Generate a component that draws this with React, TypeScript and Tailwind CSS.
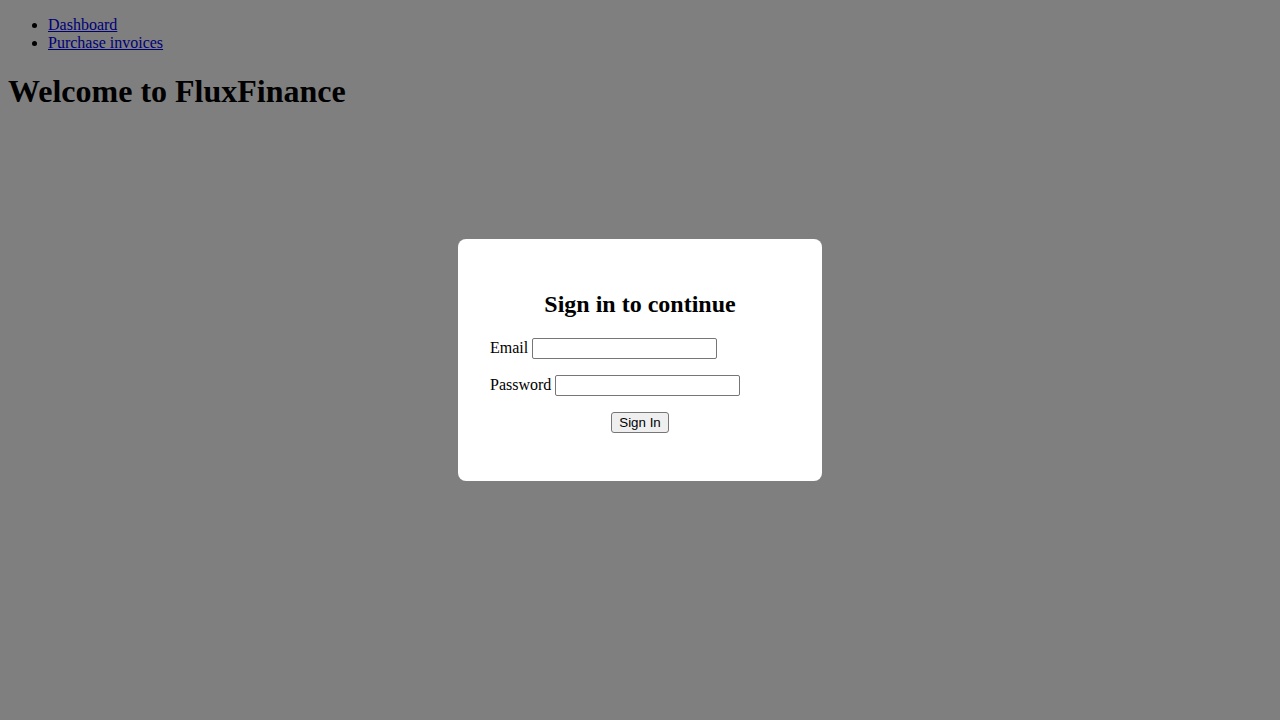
import React from "react";

const NAV = ["Dashboard", "Purchase invoices"];

export default function App() {
  return (
    <div className="min-h-screen bg-white text-black font-['Liberation_Serif',serif] text-[16px] leading-[normal]">
      <div className="px-2 pt-px">
        <ul className="list-disc pl-10 mt-[15px] mb-4">
          {NAV.map((item) => (
            <li key={item}>
              <a href="#" className="text-[#0000ee] underline">
                {item}
              </a>
            </li>
          ))}
        </ul>
        <h1 className="text-[32px] font-bold my-[21.44px]">Welcome to FluxFinance</h1>
      </div>

      {/* Sign-in modal over a dimmed page */}
      <div className="fixed inset-0 bg-black/50 flex items-center justify-center">
        <div className="bg-white rounded-lg w-[364px] px-8 py-8">
          <h2 className="text-[24px] font-bold text-center my-[19.92px]">Sign in to continue</h2>
          <form onSubmit={(e) => e.preventDefault()}>
            <p className="my-4">
              <label>
                Email{" "}
                <input
                  type="email"
                  className="w-[185px] h-[21px] border border-[#767676] rounded-[2px] px-[2px] py-px text-[13.333px] font-['Liberation_Sans',sans-serif] align-baseline bg-white"
                />
              </label>
            </p>
            <p className="my-4">
              <label>
                Password{" "}
                <input
                  type="password"
                  className="w-[185px] h-[21px] border border-[#767676] rounded-[2px] px-[2px] py-px text-[13.333px] font-['Liberation_Sans',sans-serif] align-baseline bg-white"
                />
              </label>
            </p>
            <p className="my-4 text-center">
              <button
                type="submit"
                className="h-[21px] px-[7px] py-px bg-[#efefef] border border-[#767676] rounded-[3px] text-[13.333px] font-['Liberation_Sans',sans-serif] leading-[normal]"
              >
                Sign In
              </button>
            </p>
          </form>
        </div>
      </div>
    </div>
  );
}
